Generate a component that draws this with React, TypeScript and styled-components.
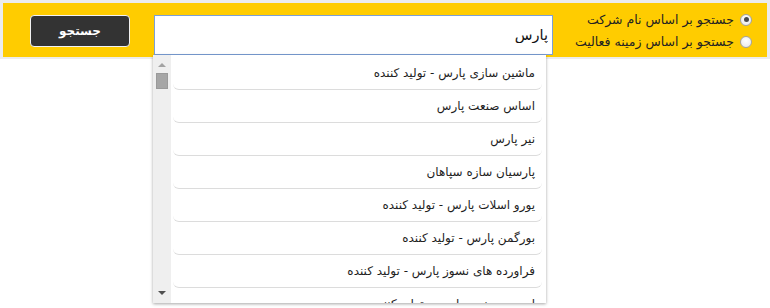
import React from 'react'
import styled, { createGlobalStyle } from 'styled-components'

const GlobalStyle = createGlobalStyle`
  html, body {
    margin: 0;
    padding: 0;
    background: #fff;
  }
  body {
    font-family: 'DejaVu Sans', 'Noto Sans', sans-serif;
    width: 770px;
    height: 308px;
    overflow: hidden;
  }
`

const results = [
  'ماشین سازی پارس - تولید کننده',
  'اساس صنعت پارس',
  'نیر پارس',
  'پارسیان سازه سپاهان',
  'یورو اسلات پارس - تولید کننده',
  'بورگمن پارس - تولید کننده',
  'فراورده های نسوز پارس - تولید کننده',
  'اسپیرو صنعت پارس - تولید کننده',
]

const StyledHeader = styled.div`
  background: #ececec;
  padding: 3px 3px 2px;
`

const StyledBar = styled.form`
  direction: rtl;
  height: 54px;
  box-sizing: border-box;
  background: #ffcc00;
  display: flex;
  flex-direction: row;
  align-items: flex-start;
  padding: 0 15px 0 0;
`

const StyledRadioGroup = styled.div`
  width: 187px;
  margin-left: 12px;
  display: flex;
  flex-direction: column;
  gap: 7px;
  padding-top: 9px;
`

const StyledRadioLabel = styled.label`
  display: flex;
  align-items: center;
  gap: 6px;
  font-size: 12.5px;
  line-height: 15px;
  color: #222;
  white-space: nowrap;
  cursor: pointer;
`

const StyledRadio = styled.input`
  appearance: none;
  margin: 0;
  width: 12px;
  height: 12px;
  border-radius: 50%;
  border: 1px solid #a3a3a3;
  background: radial-gradient(circle at 50% 35%, #ffffff 0%, #e6e6e6 100%);
  box-sizing: border-box;
  position: relative;
  flex-shrink: 0;
  &:checked::after {
    content: '';
    position: absolute;
    left: 2.5px;
    top: 2.5px;
    width: 5px;
    height: 5px;
    border-radius: 50%;
    background: #4a4a4a;
  }
`

const StyledSearchBox = styled.div`
  position: relative;
  width: 399px;
  margin-top: 12px;
`

const StyledInput = styled.input`
  width: 100%;
  height: 40px;
  box-sizing: border-box;
  border: 1px solid #7b9fd6;
  outline: none;
  background: #fff;
  padding: 0 4px;
  font-family: 'DejaVu Sans', sans-serif;
  font-size: 14.5px;
  color: #111;
  direction: rtl;
`

const StyledButton = styled.button`
  width: 100px;
  height: 32px;
  margin: 12px 24px 0 0;
  background: #333333;
  color: #fff;
  border: 1px solid #f2f2f2;
  border-radius: 4px;
  font-family: 'DejaVu Sans', sans-serif;
  font-weight: 700;
  font-size: 12px;
  cursor: pointer;
`

const StyledDropdown = styled.div`
  position: absolute;
  top: 40px;
  right: 7px;
  width: 393px;
  height: 248px;
  display: flex;
  flex-direction: row;
  background: #fff;
  box-shadow: 0 1px 3px rgba(0, 0, 0, 0.35);
  z-index: 10;
  overflow: hidden;
`

const StyledList = styled.ul`
  list-style: none;
  margin: 0;
  padding: 2px 4px 0 2px;
  flex: 1;
  overflow: hidden;
`

const StyledItem = styled.li`
  height: 33px;
  box-sizing: border-box;
  display: flex;
  align-items: center;
  padding: 0 7px 1px;
  font-size: 12px;
  color: #1e1e1e;
  border-bottom: 1px solid #dcdcdc;
  border-radius: 0 0 6px 6px;
  white-space: nowrap;
`

const StyledTrack = styled.div`
  width: 18px;
  background: #efefef;
  display: flex;
  flex-direction: column;
  align-items: center;
`

const StyledArrow = styled.div<{ $dir: 'up' | 'down' }>`
  width: 0;
  height: 0;
  border-left: 4px solid transparent;
  border-right: 4px solid transparent;
  ${(props) => (props.$dir === 'up' ? 'border-bottom: 4px solid #a3a3a3;' : 'border-top: 4px solid #505050;')}
  margin: ${(props) => (props.$dir === 'up' ? '8px 0 6px' : 'auto 0 8px')};
`

const StyledThumb = styled.div`
  width: 12px;
  height: 16px;
  background: #a6a6a6;
  border: 1px solid #9a9a9a;
  box-sizing: border-box;
`

export default function App() {
  return (
    <>
      <GlobalStyle />
      <StyledHeader>
        <StyledBar onSubmit={(e) => e.preventDefault()}>
          <StyledRadioGroup>
            <StyledRadioLabel>
              <StyledRadio type='radio' name='mode' defaultChecked />
              جستجو بر اساس نام شرکت
            </StyledRadioLabel>
            <StyledRadioLabel>
              <StyledRadio type='radio' name='mode' />
              جستجو بر اساس زمینه فعالیت
            </StyledRadioLabel>
          </StyledRadioGroup>
          <StyledSearchBox>
            <StyledInput defaultValue='پارس' />
            <StyledDropdown>
              <StyledList>
                {results.map((r) => (
                  <StyledItem key={r}>{r}</StyledItem>
                ))}
              </StyledList>
              <StyledTrack>
                <StyledArrow $dir='up' />
                <StyledThumb />
                <StyledArrow $dir='down' />
              </StyledTrack>
            </StyledDropdown>
          </StyledSearchBox>
          <StyledButton type='submit'>جستجو</StyledButton>
        </StyledBar>
      </StyledHeader>
    </>
  )
}
